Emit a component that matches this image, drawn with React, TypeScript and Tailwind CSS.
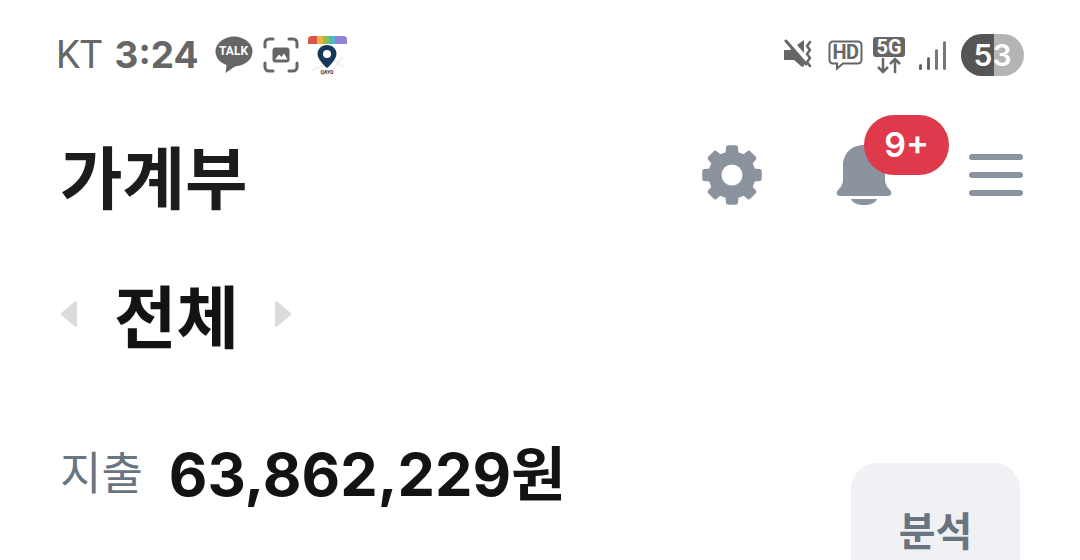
const KR = "font-['Inter','Noto_Sans_CJK_KR',sans-serif]";

function KakaoIcon() {
  return (
    <div className="relative w-[38px] h-[38px]">
      <svg viewBox="0 0 38 38" className="w-full h-full">
        <ellipse cx="19" cy="15.5" rx="18.5" ry="15" fill="#666" />
        <path d="M12 26 L10.500 37 L22 29 Z" fill="#666" />
      </svg>
      <span className="absolute left-0 right-0 top-[8px] text-center text-[12px] leading-[15px] font-bold text-white font-['Roboto',sans-serif]">TALK</span>
    </div>
  );
}

function CaptureIcon() {
  return (
    <svg viewBox="0 0 36 36" className="w-[36px] h-[36px] ml-[10px]" fill="none">
      <path d="M2 10V6a4 4 0 0 1 4-4h4M26 2h4a4 4 0 0 1 4 4v4M34 26v4a4 4 0 0 1-4 4h-4M10 34H6a4 4 0 0 1-4-4v-4" stroke="#666" strokeWidth="3" strokeLinecap="round" />
      <rect x="9.500" y="10.500" width="17" height="15" rx="3" fill="#666" />
      <path d="M12 22.500l4-5 2.500 2.500 2.500-3.500 3.500 6z" fill="#fff" />
    </svg>
  );
}

function QayoIcon() {
  return (
    <svg viewBox="0 0 40 40" className="w-[40px] h-[40px] ml-[8px]">
      <path d="M1 9V5a4 4 0 0 1 4-4h31a4 4 0 0 1 4 4v4z" fill="#e8a33d" />
      <path d="M1 9V5a4 4 0 0 1 4-4h5v8z" fill="#d9534f" />
      <rect x="10" y="1" width="6" height="8" fill="#ecb23f" />
      <rect x="16" y="1" width="6" height="8" fill="#8cc152" />
      <rect x="22" y="1" width="6" height="8" fill="#4fb6c9" />
      <path d="M28 1h8a4 4 0 0 1 4 4v4H28z" fill="#8f83d8" />
      <path d="M24 24l14 8M4 36l14-7M26 34l10-12" stroke="#eeeeee" strokeWidth="1.500" />
      <path d="M20 10c-5.500 0-9.500 4-9.500 9 0 6 9.500 14 9.500 14s9.500-8 9.500-14c0-5-4-9-9.500-9z" fill="#17375a" />
      <circle cx="20" cy="19" r="4" fill="#fff" />
      <text x="20" y="39" textAnchor="middle" fontSize="5" fontWeight="700" fill="#333" fontFamily="Roboto, sans-serif">QAYO</text>
    </svg>
  );
}

function MuteIcon() {
  return (
    <svg viewBox="0 0 32 32" className="w-[32px] h-[32px]" fill="none">
      <path d="M1 11h6l3 -2 11 12v6l-2 1-8-7H1z" fill="#666" />
      <path d="M14 6l7-5v13z" fill="#666" />
      <path d="M3 2l20 23" stroke="#666" strokeWidth="3" strokeLinecap="round" />
      <path d="M27 3l-3 4 3 4-3 4 3 4-3 4 3 4" stroke="#666" strokeWidth="2.500" strokeLinecap="round" strokeLinejoin="round" />
    </svg>
  );
}

function HdIcon() {
  return (
    <div className="relative w-[35px] h-[31px] ml-[13px]">
      <svg viewBox="0 0 35 31" className="w-full h-full" fill="none">
        <path d="M5 1.500h25a3.500 3.500 0 0 1 3.500 3.500v15a3.500 3.500 0 0 1-3.500 3.500H15l-6 5v-5H5A3.500 3.500 0 0 1 1.500 20V5A3.500 3.500 0 0 1 5 1.500z" stroke="#666" strokeWidth="2" />
      </svg>
      <span className="absolute left-0 right-0 top-[3px] text-center text-[20px] leading-[19px] font-bold text-[#666] font-['Roboto',sans-serif] tracking-[-0.5px]">HD</span>
    </div>
  );
}

function FiveGIcon() {
  return (
    <div className="relative w-[32px] h-[37px] ml-[10px]">
      <div className="w-[32px] h-[20px] rounded-[3px] bg-[#666] text-center text-white text-[20px] leading-[20px] font-bold font-['Roboto',sans-serif]">5G</div>
      <svg viewBox="0 0 32 17" className="w-[32px] h-[17px]" fill="none">
        <path d="M10 1v14M5 10l5 5 5-5M22 16V2M17 7l5-5 5 5" stroke="#666" strokeWidth="2.500" />
      </svg>
    </div>
  );
}

function SignalIcon() {
  return (
    <div className="flex items-end gap-[5px] h-[30px] ml-[14px]">
      <div className="w-[3px] h-[6px] rounded-full bg-[#666]" />
      <div className="w-[3px] h-[13px] rounded-full bg-[#666]" />
      <div className="w-[3px] h-[21px] rounded-full bg-[#777]" />
      <div className="w-[3px] h-[29px] rounded-full bg-[#777]" />
    </div>
  );
}

function Battery() {
  return (
    <div className="relative w-[63px] h-[42px] ml-[15px] rounded-full overflow-hidden bg-[#b4b4b4] font-['Inter',sans-serif]">
      <div className="absolute left-0 top-0 bottom-0 w-[33px] bg-[#555]" />
      <span className="absolute inset-0 text-center text-white text-[30px] leading-[42px] font-semibold">53</span>
    </div>
  );
}

function gearPoints() {
  const pt = (deg: number, r: number) => {
    const t = ((deg - 90) * Math.PI) / 180;
    return `${(30 + r * Math.cos(t)).toFixed(2)},${(30 + r * Math.sin(t)).toFixed(2)}`;
  };
  const out: string[] = [];
  for (let i = 0; i < 8; i++) {
    const a = i * 45;
    out.push(pt(a - 12, 22), pt(a - 8, 28), pt(a + 8, 28), pt(a + 12, 22));
  }
  return out.join(" ");
}

function Gear() {
  return (
    <svg viewBox="0 0 60 60" className="w-[60px] h-[60px]">
      <polygon points={gearPoints()} fill="#8b939f" stroke="#8b939f" strokeWidth="4" strokeLinejoin="round" />
      <circle cx="30" cy="30" r="10.500" fill="#fff" />
    </svg>
  );
}

function Bell() {
  return (
    <div className="relative w-[113px] h-[90px]">
      <svg viewBox="0 0 56 60" className="absolute left-0 top-[30px] w-[56px] h-[60px]">
        <path d="M28 0C15 0 7 9 7 21v14c0 4-2 7-5 10-2.500 2.500-1.500 6 2 6h48c3.500 0 4.500-3.500 2-6-3-3-5-6-5-10V21C49 9 41 0 28 0z" fill="#8b939f" />
        <path d="M15 54h26c-1.500 4-7 6-13 6s-11.500-2-13-6z" fill="#8b939f" />
      </svg>
      <div className="absolute left-[28px] top-0 w-[85px] h-[60px] rounded-full bg-[#de3a4c] text-center text-white text-[34px] leading-[60px] font-semibold font-['Inter',sans-serif]">9+</div>
    </div>
  );
}

function Caret({ right }: { right?: boolean }) {
  return (
    <svg viewBox="0 0 19 28" className="w-[19px] h-[28px]">
      <path d={right ? "M1 2c0-1 1-1.500 2-.5L18 14 3 26.500c-1 1-2 .500-2-.500z" : "M18 2c0-1-1-1.500-2-.5L1 14l15 12.500c1 1 2 .500 2-.500z"} fill="#dcdcdc" />
    </svg>
  );
}

export default function App() {
  return (
    <div className={`w-[1080px] h-[560px] overflow-hidden bg-white ${KR}`}>
      <div className="flex justify-between items-center pl-[56px] pr-[56px] pt-[30px] h-[80px]">
        <div className="flex items-center">
          <span className="text-[38px] leading-[50px] text-[#666] font-['Roboto',sans-serif]">KT</span>
          <span className="ml-[12px] mr-[16px] text-[37px] leading-[50px] font-bold text-[#666] font-['Inter',sans-serif]">3:24</span>
          <KakaoIcon />
          <CaptureIcon />
          <QayoIcon />
        </div>
        <div className="flex items-center">
          <MuteIcon />
          <HdIcon />
          <FiveGIcon />
          <SignalIcon />
          <Battery />
        </div>
      </div>

      <div className="flex justify-between items-center pl-[60px] pr-[57px] h-[130px] mt-[30px]">
        <h1 className="pt-[8px] text-[68px] leading-[90px] font-bold text-[#1c1c1f]">가계부</h1>
        <div className="flex items-center">
          <Gear />
          <div className="ml-[74px] mt-[-30px]">
            <Bell />
          </div>
          <div className="ml-[20px] flex flex-col gap-[12px]">
            <div className="w-[54px] h-[6px] rounded-full bg-[#8b939f]" />
            <div className="w-[54px] h-[6px] rounded-full bg-[#8b939f]" />
            <div className="w-[54px] h-[6px] rounded-full bg-[#8b939f]" />
          </div>
        </div>
      </div>

      <div className="flex items-center pl-[59px] mt-[29px] h-[90px]">
        <Caret />
        <span className="ml-[36px] mr-[35px] pt-[8px] text-[68px] leading-[90px] font-bold text-[#131313]">전체</span>
        <Caret right />
      </div>

      <div className="flex justify-between items-start pl-[60px] pr-[60px] mt-[70px]">
        <div className="flex items-center h-[90px]">
          <span className="text-[45px] leading-[60px] text-[#6a7480]">지출</span>
          <span className="ml-[26px] text-[59.500px] leading-[80px] font-bold text-[#131313]">63,862,229원</span>
        </div>
        <div className="w-[169px] h-[200px] mt-[34px] pt-[41px] rounded-[26px] bg-[#eff1f5] text-center text-[40px] leading-[56px] font-bold text-[#6a7480]">분석</div>
      </div>
    </div>
  );
}
